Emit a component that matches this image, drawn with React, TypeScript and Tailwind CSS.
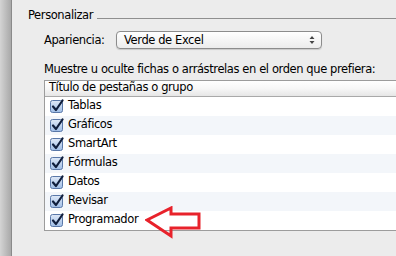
import React from "react";

const tabs = [
  "Tablas",
  "Gráficos",
  "SmartArt",
  "Fórmulas",
  "Datos",
  "Revisar",
  "Programador",
];

function Check() {
  return (
    <svg width="14" height="14" viewBox="0 0 14 14" className="shrink-0">
      <defs>
        <linearGradient id="cb" x1="0" y1="0" x2="0" y2="1">
          <stop offset="0" stopColor="#dfe9f7" />
          <stop offset="1" stopColor="#9fbde6" />
        </linearGradient>
      </defs>
      <rect x="0.5" y="1.5" width="12" height="12" rx="2" fill="url(#cb)" stroke="#5a78a8" />
      <path d="M3 7.5 L6 11 L12.5 1.5" fill="none" stroke="#0f1e3c" strokeWidth="2.2" strokeLinecap="round" strokeLinejoin="round" />
    </svg>
  );
}

export default function App() {
  return (
    <div className="flex h-[256px] w-[396px] overflow-hidden whitespace-nowrap bg-[#ececec] font-['DejaVu_Sans',sans-serif] text-[11.5px] tracking-[-0.4px] text-black">
      <div className="w-[12px] shrink-0 border-r border-[#8a8a8a] bg-gradient-to-r from-[#d4d4d4] to-[#a9a9a9]" />
      <div className="min-w-0 flex-1 pl-[16px]">
        <div className="mt-[7px] flex items-center">
          <span>Personalizar</span>
          <div className="ml-[4px] mt-[6px] h-px flex-1 bg-[#8f8f8f]" />
        </div>
        <div className="mt-[7px] flex items-center pl-[16px]">
          <span className="w-[72px]">Apariencia:</span>
          <div className="flex h-[18px] w-[206px] items-center justify-between rounded-[4px] border border-[#8c8c8c] bg-gradient-to-b from-white to-[#ececec] pl-[7px] pr-[6px] shadow-[0_1px_1px_rgba(0,0,0,0.15)]">
            <span>Verde de Excel</span>
            <svg width="6" height="10" viewBox="0 0 6 10">
              <path d="M0.5 4 L3 1 L5.5 4 Z M0.5 6 L3 9 L5.5 6 Z" fill="#444" />
            </svg>
          </div>
        </div>
        <div className="mt-[12px] pl-[16px]">Muestre u oculte fichas o arrástrelas en el orden que prefiera:</div>
        <div className="ml-[16px] mt-[1px] border-b border-l border-t border-[#9c9c9c] bg-white">
          <div className="flex h-[16px] items-center border-b border-[#a9a9a9] bg-gradient-to-b from-white via-[#f7f7f7] to-[#e6e6e6] pl-[4px]">
            Título de pestañas o grupo
          </div>
          {tabs.map((t, i) => (
            <div
              key={t}
              className={
                "flex h-[19px] items-center gap-[4px] pl-[5px] " +
                (i % 2 === 1 ? "bg-[#f3f6fa]" : "bg-white")
              }
            >
              <Check />
              <span>{t}</span>
              {t === "Programador" && (
                <svg width="58" height="34" viewBox="0 0 58 34" className="relative top-[3px] ml-[3px]">
                  <path d="M2 14 L26 2 L26 8 L54 8 L54 22 L26 22 L26 30 Z" fill="none" stroke="#e8222b" strokeWidth="3" strokeLinejoin="miter" />
                </svg>
              )}
            </div>
          ))}
        </div>
      </div>
    </div>
  );
}
